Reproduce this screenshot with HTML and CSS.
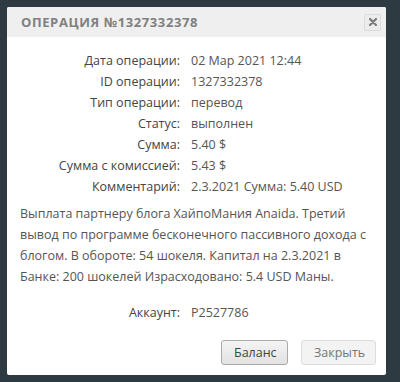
FILE: index.html
```html
<!DOCTYPE html>
<html lang="ru">
<head>
<meta charset="utf-8">
<link rel="stylesheet" href="styles.css">
</head>
<body>
<div class="modal">
  <div class="modal-header">
    <h1 class="title">Операция №1327332378</h1>
    <button class="close" aria-label="close">
      <svg width="8" height="8" viewBox="0 0 8 8"><path d="M1 1 L7 7 M7 1 L1 7" stroke="#7b7b7b" stroke-width="2.2" stroke-linecap="round"/></svg>
    </button>
  </div>
  <div class="modal-body">
    <div class="details">
      <div class="label">Дата операции:</div><div class="value">02 Мар 2021 12:44</div>
      <div class="label">ID операции:</div><div class="value">1327332378</div>
      <div class="label">Тип операции:</div><div class="value">перевод</div>
      <div class="label">Статус:</div><div class="value">выполнен</div>
      <div class="label">Сумма:</div><div class="value">5.40 $</div>
      <div class="label">Сумма с комиссией:</div><div class="value">5.43 $</div>
      <div class="label">Комментарий:</div><div class="value">2.3.2021 Сумма: 5.40 USD</div>
    </div>
    <p class="comment">Выплата партнеру блога ХайпоМания Anaida. Третий вывод по программе бесконечного пассивного дохода с блогом. В обороте: 54 шокеля. Капитал на 2.3.2021 в Банке: 200 шокелей Израсходовано: 5.4 USD Маны.</p>
    <div class="details account">
      <div class="label">Аккаунт:</div><div class="value">P2527786</div>
    </div>
  </div>
  <div class="modal-footer">
    <button class="btn btn-primary">Баланс</button>
    <button class="btn btn-light">Закрыть</button>
  </div>
</div>
</body>
</html>
```
FILE: styles.css
```css
html, body {
  margin: 0;
  background: #2d3a42;
}
body {
  padding: 7px 14px 7px 7px;
  font-family: "Open Sans", "DejaVu Sans", sans-serif;
  color: #444;
}
.modal {
  width: 379px;
  height: 368px;
  background: #fff;
  border-radius: 2px;
  display: flex;
  flex-direction: column;
  box-sizing: border-box;
}
.modal-header {
  height: 30px;
  background: #efefef;
  display: flex;
  align-items: center;
  justify-content: space-between;
  padding: 0 5px 0 14px;
  border-radius: 2px 2px 0 0;
}
.title {
  margin: 0;
  font-size: 13px;
  font-weight: 700;
  text-transform: uppercase;
  letter-spacing: 0.6px;
  color: #808080;
}
.close {
  width: 17px;
  height: 17px;
  padding: 0;
  border: 1px solid #dcdcdc;
  border-radius: 2px;
  background: #ececec;
  display: flex;
  align-items: center;
  justify-content: center;
}
.modal-body {
  padding: 13px 14px 0 13px;
  flex: 1;
}
.details {
  display: grid;
  grid-template-columns: 160px 1fr;
  column-gap: 11px;
  font-size: 12.5px;
  line-height: 21px;
}
.label {
  text-align: right;
  color: #444;
}
.value {
  color: #555;
  white-space: nowrap;
}
.comment {
  margin: 6px 0 0;
  font-size: 12.5px;
  line-height: 21px;
  color: #555;
}
.account {
  margin-top: 15px;
}
.modal-footer {
  display: flex;
  justify-content: flex-end;
  gap: 13px;
  padding: 0 10px 10px 0;
}
.btn {
  height: 25px;
  font-family: inherit;
  font-size: 12.5px;
  border-radius: 3px;
  padding: 0 12px;
}
.btn-primary {
  width: 67px;
  background: linear-gradient(#f4f4f4, #e2e2e2);
  border: 1px solid #aaa;
  color: #444;
}
.btn-light {
  width: 75px;
  background: #f3f3f3;
  border: 1px solid #dcdcdc;
  color: #777;
}
```
